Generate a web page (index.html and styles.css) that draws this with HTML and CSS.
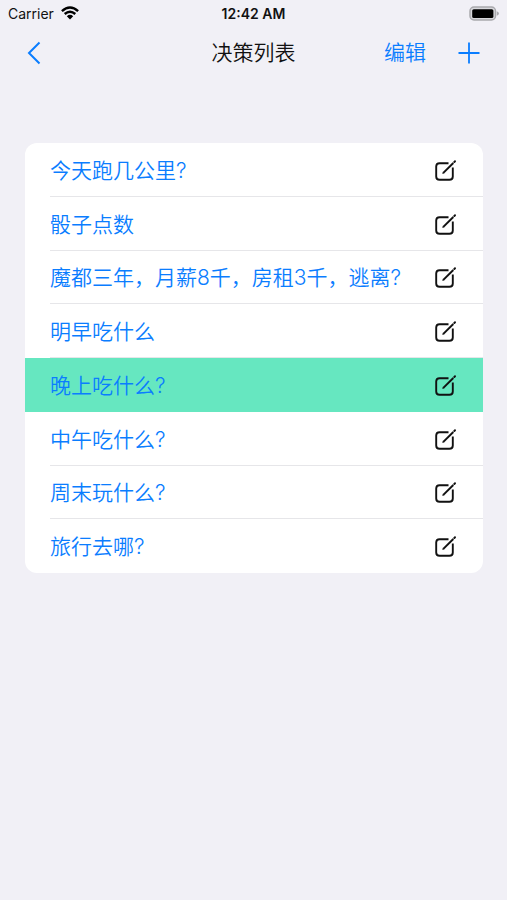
FILE: index.html
```html
<!DOCTYPE html>
<html lang="zh-CN">
<head>
<meta charset="utf-8">
<meta name="viewport" content="width=device-width, initial-scale=1">
<title>决策列表</title>
<link rel="stylesheet" href="styles.css">
</head>
<body>
<svg width="0" height="0" class="sprite" aria-hidden="true">
  <symbol id="compose" viewBox="0 0 24 24">
    <path d="M14.5 4.2H5.6Q2.2 4.2 2.2 7.6V17.4Q2.2 20.8 5.6 20.8H15.4Q18.8 20.8 18.8 17.4V8.5" fill="none" stroke="currentColor" stroke-width="1.9"/>
    <path d="M9.3 13.9L19.3 4" fill="none" stroke="currentColor" stroke-width="2"/>
    <path d="M8.3 14.9L8.9 12.8L10.4 14.3Z" fill="currentColor"/>
    <path d="M20.3 3L21 2.3" fill="none" stroke="currentColor" stroke-width="2" stroke-linecap="round"/>
  </symbol>
</svg>
<div class="status">
  <div class="carrier">
    <span>Carrier</span>
    <svg width="18" height="14" viewBox="0 0 18 14" aria-hidden="true">
      <path d="M.9 5.1Q9-2.3 17.1 5.1M3.7 8Q9 3.3 14.3 8" fill="none" stroke="#000" stroke-width="2.4"/>
      <path d="M5.8 10.2Q9 7.4 12.2 10.2L9 13.6Z" fill="#000"/>
    </svg>
  </div>
  <time class="clock">12:42 AM</time>
  <svg class="battery" width="30" height="15" viewBox="0 0 30 15" aria-hidden="true">
    <rect x="1" y="1" width="25.5" height="13" rx="4" fill="#d8d8dc" stroke="#a9a9ad" stroke-width="1.5"/>
    <rect x="3.2" y="3.2" width="21.2" height="8.8" rx="1.6" fill="#000"/>
    <path d="M27.8 5.3Q30 6.1 30 7.5Q30 8.9 27.8 9.7Z" fill="#a9a9ad"/>
  </svg>
</div>
<header class="nav">
  <button class="back" aria-label="返回">
    <svg width="14" height="24" viewBox="0 0 14 24" aria-hidden="true"><path d="M12.5 1.5L2 12L12.5 22.5" fill="none" stroke="currentColor" stroke-width="2"/></svg>
  </button>
  <h1>决策列表</h1>
  <div class="actions">
    <button>编辑</button>
    <button aria-label="添加">
      <svg width="22" height="22" viewBox="0 0 22 22" aria-hidden="true"><path d="M11 .5V21.5M.5 11H21.5" fill="none" stroke="currentColor" stroke-width="1.8"/></svg>
    </button>
  </div>
</header>
<main>
  <ul class="list">
    <li><a href="#">今天跑几公里?</a><button aria-label="编辑"><svg width="24" height="24"><use href="#compose"/></svg></button></li>
    <li><a href="#">骰子点数</a><button aria-label="编辑"><svg width="24" height="24"><use href="#compose"/></svg></button></li>
    <li><a href="#">魔都三年，月薪8千，房租3千，逃离?</a><button aria-label="编辑"><svg width="24" height="24"><use href="#compose"/></svg></button></li>
    <li><a href="#">明早吃什么</a><button aria-label="编辑"><svg width="24" height="24"><use href="#compose"/></svg></button></li>
    <li class="selected"><a href="#">晚上吃什么?</a><button aria-label="编辑"><svg width="24" height="24"><use href="#compose"/></svg></button></li>
    <li><a href="#">中午吃什么?</a><button aria-label="编辑"><svg width="24" height="24"><use href="#compose"/></svg></button></li>
    <li><a href="#">周末玩什么?</a><button aria-label="编辑"><svg width="24" height="24"><use href="#compose"/></svg></button></li>
    <li><a href="#">旅行去哪?</a><button aria-label="编辑"><svg width="24" height="24"><use href="#compose"/></svg></button></li>
  </ul>
</main>
</body>
</html>
```
FILE: styles.css
```css
* {
  box-sizing: border-box;
}

body {
  margin: 0;
  min-height: 100vh;
  background: #f1f0f6;
  color: #111;
  font-family: Inter, "Noto Sans CJK SC", sans-serif;
  font-size: 21px;
  font-weight: 350;
}

svg {
  display: block;
}

.sprite {
  position: absolute;
}

button {
  display: flex;
  align-items: center;
  padding: 0;
  border: 0;
  background: none;
  color: #0a7dff;
  font: inherit;
  line-height: 30px;
}

.status,
.nav {
  display: grid;
  grid-template-columns: 1fr auto 1fr;
  align-items: center;
}

.status {
  height: 26px;
  padding: 0 8px;
  font-size: 14px;
  font-weight: 400;
}

.carrier {
  display: flex;
  align-items: center;
  gap: 7px;
}

.clock {
  font-weight: 600;
}

.battery {
  justify-self: end;
}

.nav {
  height: 54px;
  padding: 0 27px;
}

.nav h1 {
  margin: 0;
  font-size: 21px;
  font-weight: 350;
  line-height: 30px;
}

.actions {
  display: flex;
  justify-content: flex-end;
  gap: 32px;
}

.list {
  display: grid;
  grid-auto-rows: 1fr;
  min-height: 430px;
  margin: 63px 24px 0 25px;
  padding: 0;
  overflow: hidden;
  border-radius: 12px;
  background: #fff;
  list-style: none;
}

.list li {
  display: flex;
  align-items: center;
  justify-content: space-between;
  padding: 2px 25px 0;
  background: linear-gradient(#e6e6e9, #e6e6e9) 25px 100% / 100% 1px no-repeat;
}

.list li:last-child {
  background: none;
}

.list .selected {
  background: #66e7c0;
}

.list a {
  color: #0a7dff;
  line-height: 30px;
  text-decoration: none;
  white-space: nowrap;
}

.list button {
  color: #111;
}
```
